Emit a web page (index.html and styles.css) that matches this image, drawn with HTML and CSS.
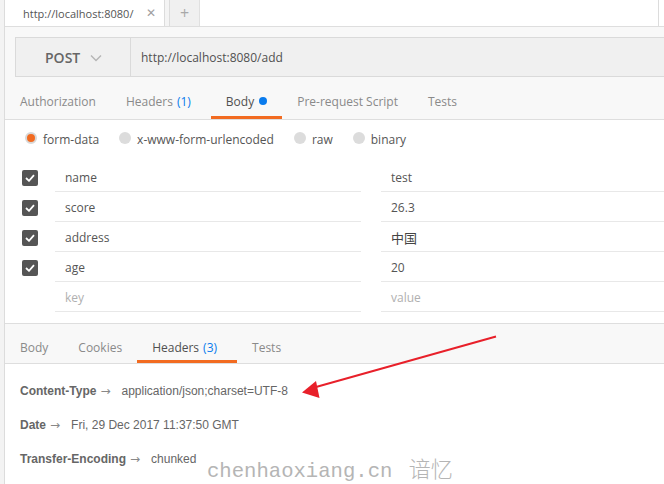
FILE: index.html
```html
<!DOCTYPE html>
<html>
<head>
<meta charset="utf-8">
<link rel="stylesheet" href="styles.css">
</head>
<body>
<div class="app">
  <div class="rail"></div>
  <div class="main">
    <div class="tabbar">
      <div class="tab active"><span class="tab-title">http://localhost:8080/</span><span class="tab-close">✕</span></div>
      <div class="tab-sep"></div>
      <div class="tab plus">+</div>
      <div class="tab-fill"></div>
    </div>
    <div class="urlarea">
      <div class="urlbar">
        <div class="method"><span>POST</span>
          <svg class="chev" width="12" height="8" viewBox="0 0 12 8"><path d="M1 1.5 L6 6.5 L11 1.5" fill="none" stroke="#b5b5b5" stroke-width="1.4"/></svg>
        </div>
        <div class="url">http://localhost:8080/add</div>
      </div>
    </div>
    <div class="reqtabs">
      <div class="rtab">Authorization</div>
      <div class="rtab">Headers <span class="count">(1)</span></div>
      <div class="rtab on">Body <span class="dot"></span></div>
      <div class="rtab">Pre-request Script</div>
      <div class="rtab">Tests</div>
    </div>
    <div class="bodypane">
      <div class="modes">
        <label class="mode"><span class="radio sel"></span>form-data</label>
        <label class="mode"><span class="radio"></span>x-www-form-urlencoded</label>
        <label class="mode"><span class="radio"></span>raw</label>
        <label class="mode"><span class="radio"></span>binary</label>
      </div>
      <div class="kv">
        <div class="row"><span class="cb"><svg width="10" height="8" viewBox="0 0 10 8"><path d="M1 4 L4 6.8 L9 1.2" fill="none" stroke="#fff" stroke-width="1.8"/></svg></span><div class="key">name</div><div class="val">test</div></div>
        <div class="row"><span class="cb"><svg width="10" height="8" viewBox="0 0 10 8"><path d="M1 4 L4 6.8 L9 1.2" fill="none" stroke="#fff" stroke-width="1.8"/></svg></span><div class="key">score</div><div class="val">26.3</div></div>
        <div class="row"><span class="cb"><svg width="10" height="8" viewBox="0 0 10 8"><path d="M1 4 L4 6.8 L9 1.2" fill="none" stroke="#fff" stroke-width="1.8"/></svg></span><div class="key">address</div><div class="val cjk">中国</div></div>
        <div class="row"><span class="cb"><svg width="10" height="8" viewBox="0 0 10 8"><path d="M1 4 L4 6.8 L9 1.2" fill="none" stroke="#fff" stroke-width="1.8"/></svg></span><div class="key">age</div><div class="val">20</div></div>
        <div class="row"><span class="cb empty"></span><div class="key ph">key</div><div class="val ph">value</div></div>
      </div>
    </div>
    <div class="restabs">
      <div class="rtab">Body</div>
      <div class="rtab">Cookies</div>
      <div class="rtab on">Headers <span class="count">(3)</span></div>
      <div class="rtab">Tests</div>
    </div>
    <div class="headers">
      <div class="hrow"><span class="hk">Content-Type</span><span class="arr">→</span><span class="hv">application/json;charset=UTF-8</span></div>
      <div class="hrow"><span class="hk">Date</span><span class="arr">→</span><span class="hv">Fri, 29 Dec 2017 11:37:50 GMT</span></div>
      <div class="hrow"><span class="hk">Transfer-Encoding</span><span class="arr">→</span><span class="hv">chunked</span></div>
    </div>
  </div>
</div>
<svg class="arrow" width="664" height="484" viewBox="0 0 664 484">
  <line x1="496" y1="336.5" x2="316" y2="387" stroke="#e8202a" stroke-width="2"/>
  <polygon points="302,392.5 316,381 319.5,398" fill="#e8202a"/>
</svg>
<div class="watermark">chenhaoxiang.cn <span class="wm-cjk">谙忆</span></div>
</body>
</html>
```

FILE: styles.css
```css
html, body {
  margin: 0;
  padding: 0;
  background: #fff;
  width: 664px;
  height: 484px;
  overflow: hidden;
  font-family: "Open Sans", "Noto Sans CJK SC", sans-serif;
  font-size: 12px;
  color: #505050;
}
.app {
  display: flex;
  height: 484px;
}
.rail {
  width: 4px;
  background: #f3f3f3;
  border-right: 1px solid #dcdcdc;
  flex: none;
}
.main {
  flex: 1;
  min-width: 0;
  display: flex;
  flex-direction: column;
}
.tabbar {
  height: 26px;
  display: flex;
  border-bottom: 1px solid #dedede;
  padding-left: 11px;
  background: #fff;
}
.tab {
  display: flex;
  align-items: center;
}
.tab.active {
  width: 148px;
  padding-left: 7px;
  box-sizing: border-box;
  background: #fff;
  justify-content: space-between;
  padding-right: 8px;
}
.tab-title {
  color: #555;
  font-size: 11px;
  white-space: nowrap;
}
.tab-close {
  color: #a0a0a0;
  font-size: 12px;
  font-family: "DejaVu Sans", sans-serif;
}
.tab-sep {
  width: 4px;
  border-left: 1px solid #dcdcdc;
  border-right: 1px solid #dcdcdc;
  background: #f4f4f4;
}
.tab.plus {
  width: 29px;
  justify-content: center;
  background: #f0f0f0;
  border-right: 1px solid #e0e0e0;
  color: #a8a8a8;
  font-size: 16px;
}
.tab-fill {
  flex: 1;
  border-right: 1px solid #dcdcdc;
  margin-right: 5px;
}
.urlarea {
  background: #f8f8f8;
  padding: 10px 0 0 10px;
}
.urlbar {
  display: flex;
  height: 38px;
  border: 1px solid #dadada;
  border-right: none;
  background: #f0f0f0;
}
.method {
  width: 115px;
  border-right: 1px solid #dadada;
  display: flex;
  align-items: center;
  padding-left: 29px;
  box-sizing: border-box;
  gap: 10px;
  font-size: 14px;
  font-weight: 600;
  color: #666;
}
.chev { margin-top: 1px; }
.url {
  display: flex;
  align-items: center;
  padding-left: 10px;
  color: #505050;
  font-size: 12px;
}
.reqtabs, .restabs {
  display: flex;
  background: #f8f8f8;
  border-bottom: 1px solid #dedede;
}
.reqtabs {
  height: 42px;
}
.rtab {
  padding: 9px 15px 0 15px;
  display: flex;
  align-items: center;
  gap: 4px;
  color: #8a8a8a;
  font-size: 12px;
  white-space: nowrap;
  box-sizing: border-box;
  border-bottom: 3px solid transparent;
}
.rtab.on {
  color: #505050;
  border-bottom-color: #f26b21;
}
.reqtabs .rtab.on { margin-left: 5px; }
.restabs .rtab.on { padding-right: 20px; }
.count { color: #097bed; }
.dot {
  width: 8px;
  height: 8px;
  border-radius: 50%;
  background: #097bed;
  display: inline-block;
  margin-left: 1px;
}
.bodypane {
  padding: 0 0 11px 0;
  border-bottom: 1px solid #dedede;
}
.modes {
  display: flex;
  height: 42px;
  box-sizing: border-box;
  padding: 0 0 4px 20px;
  align-items: center;
  gap: 20px;
}
.mode {
  display: flex;
  align-items: center;
  gap: 6px;
  color: #555;
  font-size: 12px;
}
.radio {
  width: 12px;
  height: 12px;
  border-radius: 50%;
  background: #dcdcdc;
  box-sizing: border-box;
  margin-top: -3px;
}
.radio.sel {
  background: #f26b21;
  border: 2px solid #d8d8d8;
}
.kv {
  display: flex;
  flex-direction: column;
}
.row {
  display: flex;
  height: 30px;
}
.cb {
  width: 16px;
  height: 16px;
  background: #555;
  border-radius: 2px;
  margin: 8px 0 0 17px;
  display: flex;
  align-items: center;
  justify-content: center;
  flex: none;
}
.cb.empty { background: none; }
.key {
  width: 306px;
  margin-left: 17px;
  padding: 2px 0 0 10px;
  box-sizing: border-box;
  border-bottom: 1px solid #e8e8e8;
  display: flex;
  align-items: center;
  color: #555;
}
.val {
  flex: 1;
  margin-left: 20px;
  padding: 2px 0 0 10px;
  border-bottom: 1px solid #e8e8e8;
  display: flex;
  align-items: center;
  color: #555;
}
.val.cjk { font-size: 13px; color: #444; }
.ph { color: #b0b0b0; }
.restabs {
  height: 39px;
}
.restabs .rtab { padding-top: 11px; }
.headers {
  display: flex;
  flex-direction: column;
  padding: 18px 0 0 15px;
  gap: 17px;
  font-family: "Liberation Sans", Arial, sans-serif;
  font-size: 12px;
  color: #666;
}
.hrow {
  height: 17px;
  display: flex;
  align-items: center;
  white-space: nowrap;
}
.hk { font-weight: bold; color: #666; }
.arr { color: #888; margin: 0 11px 0 4px; font-family: "DejaVu Sans", sans-serif; font-size: 12px; }
.hv { color: #666; }
.arrow {
  position: absolute;
  left: 0;
  top: 0;
  pointer-events: none;
}
.watermark {
  position: absolute;
  left: 207px;
  top: 451px;
  font-family: "Liberation Mono", monospace;
  font-size: 20.6px;
  color: #b5b5b5;
  white-space: nowrap;
}
.wm-cjk {
  font-family: "Noto Sans CJK SC", sans-serif;
  font-size: 22px;
  font-weight: 300;
  margin-left: 4px;
}
```
